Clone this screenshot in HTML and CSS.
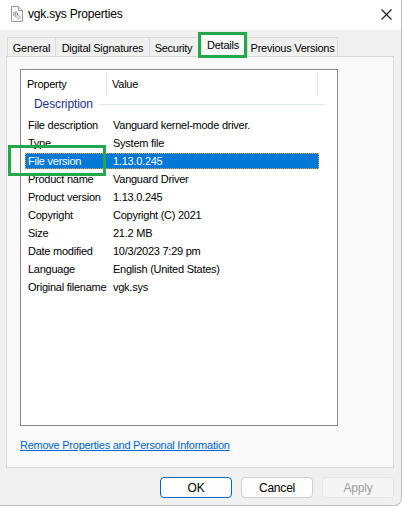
FILE: index.html
```html
<!DOCTYPE html>
<html>
<head>
<meta charset="utf-8">
<link rel="stylesheet" href="styles.css">
</head>
<body>
<div class="window">
  <div class="titlebar">
    <svg class="file-icon" width="13" height="16" viewBox="0 0 13 16">
      <path d="M1.5 0.5 H8.5 L12.5 4.5 V15.5 H1.5 Z" fill="#fbfbfb" stroke="#9a9a9a"/>
      <path d="M8.5 0.5 V4.5 H12.5" fill="#e6e6e6" stroke="#9a9a9a"/>
      <circle cx="5.5" cy="8" r="2" fill="none" stroke="#7d7d7d" stroke-width="1.4" stroke-dasharray="1.2 0.9"/>
      <circle cx="5.5" cy="8" r="0.8" fill="#7d7d7d"/>
      <circle cx="8.5" cy="11.2" r="1.5" fill="none" stroke="#9a9a9a" stroke-width="1.2" stroke-dasharray="1 0.8"/>
    </svg>
    <span class="title">vgk.sys Properties</span>
    <svg class="close" width="11" height="11" viewBox="0 0 11 11">
      <path d="M0.5 0.5 L10.5 10.5 M10.5 0.5 L0.5 10.5" stroke="#1a1a1a" stroke-width="1.1"/>
    </svg>
  </div>

  <div class="tabs">
    <div class="tab t-general">General</div>
    <div class="tab t-digital">Digital Signatures</div>
    <div class="tab t-security">Security</div>
    <div class="tab t-details active">Details</div>
    <div class="tab t-prev">Previous Versions</div>
  </div>

  <div class="panel">
    <div class="listbox">
      <div class="list-header">
        <div class="hcell hcell-prop">Property</div>
        <div class="hcell hcell-val">Value</div>
      </div>
      <div class="group"><span class="group-label">Description</span><span class="group-line"></span></div>
      <div class="row"><span class="cell">File description</span><span class="cell">Vanguard kernel-mode driver.</span></div>
      <div class="row"><span class="cell">Type</span><span class="cell">System file</span></div>
      <div class="row selected"><span class="cell">File version</span><span class="cell">1.13.0.245</span></div>
      <div class="row"><span class="cell">Product name</span><span class="cell">Vanguard Driver</span></div>
      <div class="row"><span class="cell">Product version</span><span class="cell">1.13.0.245</span></div>
      <div class="row"><span class="cell">Copyright</span><span class="cell">Copyright (C) 2021</span></div>
      <div class="row"><span class="cell">Size</span><span class="cell">21.2 MB</span></div>
      <div class="row"><span class="cell">Date modified</span><span class="cell">10/3/2023 7:29 pm</span></div>
      <div class="row"><span class="cell">Language</span><span class="cell">English (United States)</span></div>
      <div class="row"><span class="cell">Original filename</span><span class="cell">vgk.sys</span></div>
    </div>
    <a class="link" href="#">Remove Properties and Personal Information</a>
  </div>

  <div class="buttons">
    <div class="btn btn-default">OK</div>
    <div class="btn">Cancel</div>
    <div class="btn btn-disabled">Apply</div>
  </div>

  <div class="annot annot-tab"></div>
  <div class="annot annot-row"></div>
</div>
</body>
</html>
```

FILE: styles.css
```css
html, body {
  margin: 0;
  padding: 0;
  background: #ffffff;
}

.window {
  position: relative;
  width: 402px;
  height: 506px;
  box-sizing: border-box;
  background: #f0f0f0;
  border-right: 1px solid #bdbdbd;
  border-bottom: 1px solid #bdbdbd;
  border-bottom-right-radius: 8px;
  font-family: "Liberation Sans", Arial, sans-serif;
  font-size: 11px;
  letter-spacing: -0.25px;
  color: #000;
  overflow: hidden;
}

.titlebar {
  height: 30px;
  background: #ffffff;
  display: flex;
  align-items: center;
}

.file-icon {
  margin-left: 10px;
  margin-top: -2px;
}

.title {
  margin-left: 5px;
  margin-top: -2px;
  font-size: 12px;
  letter-spacing: -0.2px;
  color: #000;
}

.close {
  margin-left: auto;
  margin-right: 9px;
  margin-top: -2px;
}

.tabs {
  display: flex;
  align-items: flex-end;
  height: 26px;
  padding-left: 7px;
  box-sizing: border-box;
  position: relative;
  z-index: 2;
}

.tab {
  height: 19px;
  box-sizing: border-box;
  border: 1px solid #d9d9d9;
  border-bottom: none;
  border-right: none;
  background: #f0f0f0;
  display: flex;
  align-items: center;
  justify-content: center;
  padding-top: 1px;
}

.t-general { width: 48px; }
.t-digital { width: 94px; }
.t-security { width: 48px; }
.t-details { width: 50px; }
.t-prev { width: 91px; border-right: 1px solid #d9d9d9; }

.tab.active {
  height: 23px;
  margin-bottom: -1px;
  background: #f9f9f9;
  border-right: 1px solid #d9d9d9;
  margin-left: 1px;
  margin-right: -1px;
  padding-top: 0;
  padding-bottom: 2px;
}

.panel {
  margin-left: 6px;
  width: 388px;
  height: 412px;
  box-sizing: border-box;
  background: #f9f9f9;
  border: 1px solid #d9d9d9;
  padding: 12px 0 0 13px;
  position: relative;
  z-index: 1;
}

.listbox {
  width: 318px;
  height: 357px;
  box-sizing: border-box;
  background: #ffffff;
  border: 1px solid #828790;
}

.list-header {
  display: flex;
  height: 26px;
  padding-top: 2px;
  box-sizing: border-box;
}

.hcell {
  display: flex;
  align-items: center;
  height: 23px;
  box-sizing: border-box;
}

.hcell-prop {
  width: 86px;
  padding-left: 6px;
  border-right: 1px solid #e5e5e5;
}

.hcell-val {
  width: 211px;
  padding-left: 5px;
  border-right: 1px solid #e5e5e5;
}

.group {
  display: flex;
  align-items: center;
  height: 20px;
  padding-bottom: 4px;
  box-sizing: border-box;
  padding-left: 13px;
}

.group-label {
  color: #1e3287;
  font-size: 12px;
  letter-spacing: -0.1px;
}

.group-line {
  width: 226px;
  height: 1px;
  background: #dde4f2;
  margin-left: 6px;
}

.row {
  display: grid;
  grid-template-columns: 85px 209px;
  width: 294px;
  height: 18px;
  margin-left: 4px;
  align-items: center;
}

.cell {
  padding-left: 3px;
  white-space: nowrap;
}

.row.selected {
  height: 16px;
  margin-top: 1px;
  margin-bottom: 1px;
  background: #0078d7;
  color: #ffffff;
  box-sizing: border-box;
  outline: 1px dotted #e0a040;
  outline-offset: -1px;
}

.link {
  display: block;
  margin-top: 12px;
  margin-left: 0;
  width: max-content;
  color: #0066cc;
  text-decoration: underline;
  line-height: 14px;
}

.buttons {
  display: flex;
  justify-content: flex-end;
  gap: 9px;
  padding-top: 9px;
  padding-right: 7px;
}

.btn {
  width: 72px;
  height: 21px;
  box-sizing: border-box;
  border: 1px solid #d0d0d0;
  border-radius: 4px;
  background: #fdfdfd;
  display: flex;
  align-items: center;
  justify-content: center;
  font-size: 12px;
  letter-spacing: -0.2px;
}

.btn-default {
  border-color: #0067c0;
}

.btn-disabled {
  background: #f5f5f5;
  border-color: #e5e5e5;
  color: #a0a0a0;
}

.annot {
  position: absolute;
  border: 3px solid #22a84b;
  box-sizing: border-box;
  z-index: 5;
}

.annot-tab {
  left: 198px;
  top: 32px;
  width: 49px;
  height: 26px;
}

.annot-row {
  left: 8px;
  top: 145px;
  width: 98px;
  height: 31px;
}
```
